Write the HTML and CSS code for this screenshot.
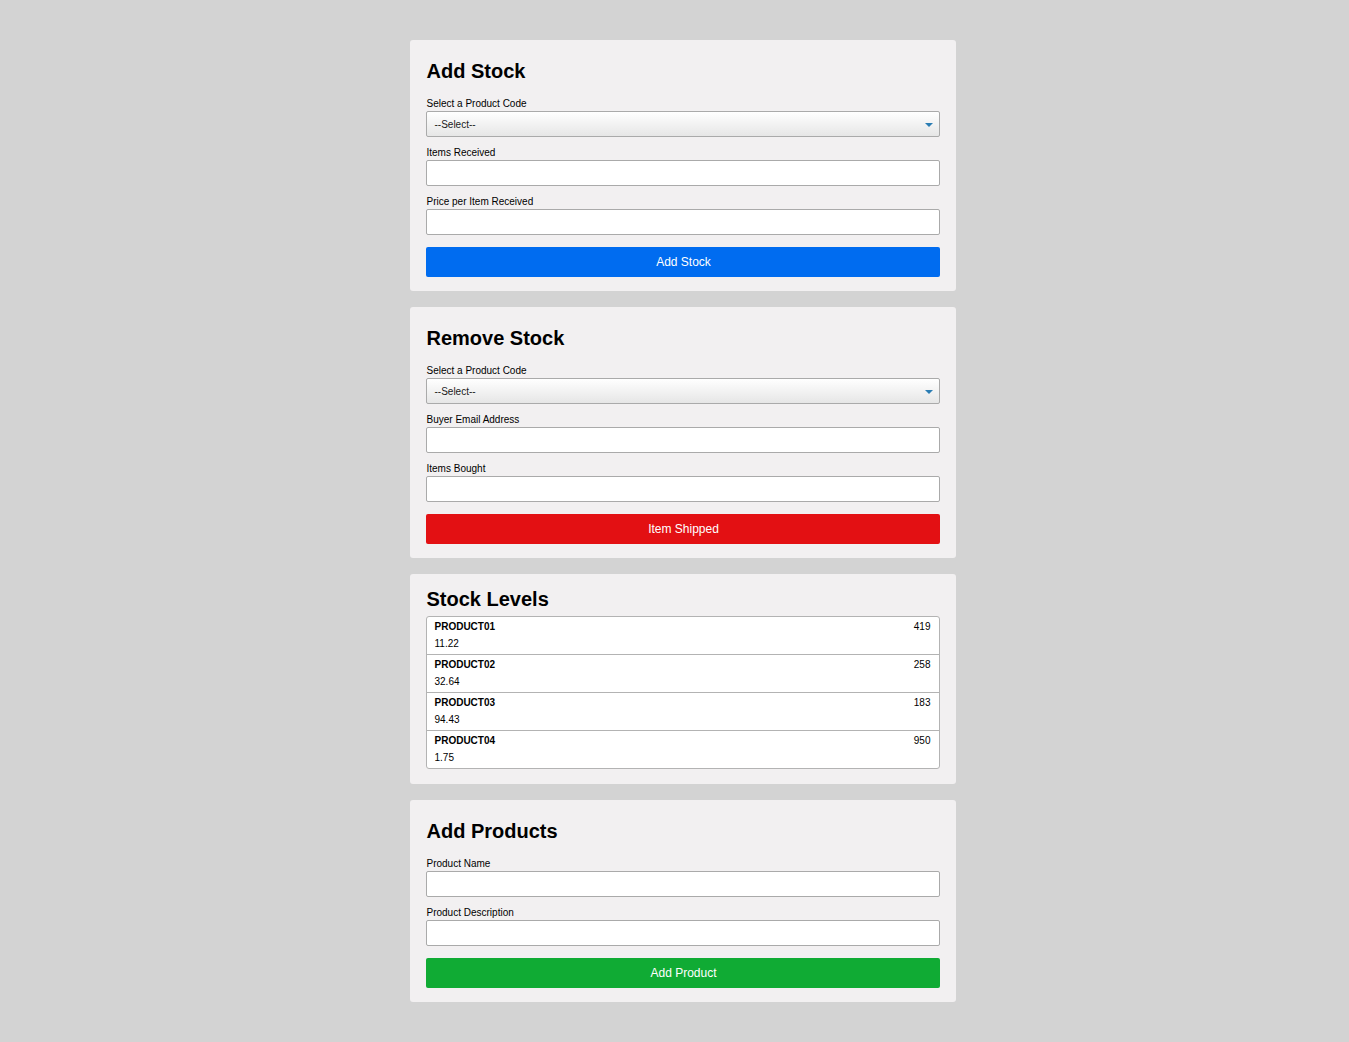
FILE: index.html
```html
<!DOCTYPE html>
<html>
<head>
<meta charset="utf-8">
<link rel="stylesheet" href="styles.css">
</head>
<body>
<main class="page">
  <section class="card form-card">
    <h2 class="card-title">Add Stock</h2>
    <label class="field-label">Select a Product Code</label>
    <div class="select-box"><span>--Select--</span><span class="arrow"></span></div>
    <label class="field-label">Items Received</label>
    <div class="text-input"></div>
    <label class="field-label">Price per Item Received</label>
    <div class="text-input"></div>
    <button class="btn btn-blue">Add Stock</button>
  </section>

  <section class="card form-card">
    <h2 class="card-title">Remove Stock</h2>
    <label class="field-label">Select a Product Code</label>
    <div class="select-box"><span>--Select--</span><span class="arrow"></span></div>
    <label class="field-label">Buyer Email Address</label>
    <div class="text-input"></div>
    <label class="field-label">Items Bought</label>
    <div class="text-input"></div>
    <button class="btn btn-red">Item Shipped</button>
  </section>

  <section class="card stock-card">
    <h2 class="card-title stock-title">Stock Levels</h2>
    <ul class="stock-list">
      <li class="stock-row"><div class="stock-info"><span class="stock-name">PRODUCT01</span><span class="stock-price">11.22</span></div><span class="stock-count">419</span></li>
      <li class="stock-row"><div class="stock-info"><span class="stock-name">PRODUCT02</span><span class="stock-price">32.64</span></div><span class="stock-count">258</span></li>
      <li class="stock-row"><div class="stock-info"><span class="stock-name">PRODUCT03</span><span class="stock-price">94.43</span></div><span class="stock-count">183</span></li>
      <li class="stock-row"><div class="stock-info"><span class="stock-name">PRODUCT04</span><span class="stock-price">1.75</span></div><span class="stock-count">950</span></li>
    </ul>
  </section>

  <section class="card form-card">
    <h2 class="card-title">Add Products</h2>
    <label class="field-label">Product Name</label>
    <div class="text-input"></div>
    <label class="field-label">Product Description</label>
    <div class="text-input"></div>
    <button class="btn btn-green">Add Product</button>
  </section>
</main>
</body>
</html>
```

FILE: styles.css
```css
* { box-sizing: border-box; }
html, body {
  margin: 0;
  padding: 0;
  background: #d3d3d3;
  font-family: "Liberation Sans", Arial, sans-serif;
  color: #000;
}
.page {
  width: 546px;
  margin: 0 auto;
  padding: 40px 0;
  display: flex;
  flex-direction: column;
  gap: 16px;
  position: relative;
  left: 8px;
}
.card {
  background: #f2f0f1;
  border-radius: 3px;
  padding: 19px 16px 14px 16px;
  display: flex;
  flex-direction: column;
}
.card-title {
  margin: 0 0 14px 1px;
  font-size: 20px;
  line-height: 24px;
  font-weight: bold;
}
.field-label {
  display: block;
  font-size: 10px;
  line-height: 12px;
  padding-top: 1px;
  margin-bottom: 1px;
  padding-left: 1px;
}
.select-box {
  height: 26px;
  border: 1px solid #aaaaaa;
  border-radius: 2px;
  background: linear-gradient(#ffffff, #e6e6e6);
  display: flex;
  align-items: center;
  justify-content: space-between;
  padding: 0 6px 0 8px;
  font-size: 10px;
  color: #1a1a1a;
  margin-bottom: 9px;
}
.arrow {
  width: 0;
  height: 0;
  border-left: 4px solid transparent;
  border-right: 4px solid transparent;
  border-top: 4px solid #2b7db3;
  margin-top: 1px;
}
.text-input {
  height: 26px;
  border: 1px solid #aaaaaa;
  border-radius: 2px;
  background: #fff;
  margin-bottom: 9px;
}
.text-input + .btn { margin-top: 3px; }
.btn {
  height: 30px;
  border: none;
  border-radius: 2px;
  color: #fff;
  font-family: "Liberation Sans", Arial, sans-serif;
  font-size: 12px;
  padding: 0 0 0 2px;
  width: 100%;
}
.btn-blue { background: #006cf0; }
.btn-red { background: #e31013; }
.btn-green { background: #10ab34; }

.stock-card { padding: 13px 16px 15px; }
.stock-title { margin-bottom: 5px; }
.stock-list {
  list-style: none;
  margin: 0;
  padding: 0;
  background: #fff;
  border: 1px solid #b3b3b3;
  border-radius: 3px;
}
.stock-row {
  display: flex;
  justify-content: space-between;
  padding: 4px 8px 4px 8px;
  border-bottom: 1px solid #b3b3b3;
  font-size: 10px;
  line-height: 12px;
}
.stock-row:last-child { border-bottom: none; }
.stock-info {
  display: flex;
  flex-direction: column;
  gap: 5px;
}
.stock-name { font-weight: bold; }
.stock-count { padding-right: 0; }
```
